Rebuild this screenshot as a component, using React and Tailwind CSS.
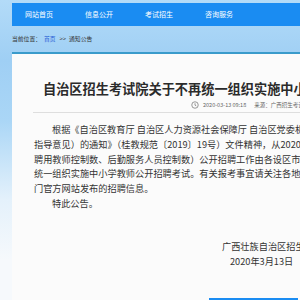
export default function App() {
  const font = { fontFamily: '"Noto Sans CJK SC", "Noto Sans", sans-serif' };
  return (
    <div
      className="w-[300px] h-[300px] overflow-hidden bg-[linear-gradient(180deg,#b3dbf8_0px,#9fcff4_60px,#aad6f6_120px,#e4f1fb_200px,#f6f9fc_260px)]"
      style={font}
    >
      <div className="w-[700px]">
        {/* nav */}
        <div className="mt-[3px] ml-[12px] h-[23px] bg-[#1a8cf2] flex items-center text-white text-[7px] whitespace-nowrap">
          <span className="ml-[13px] w-[60px]">网站首页</span>
          <span className="w-[60px]">信息公开</span>
          <span className="w-[60px]">考试招生</span>
          <span className="w-[60px]">咨询服务</span>
        </div>
        {/* breadcrumb */}
        <div className="ml-[12px] h-[26px] flex items-center text-[5.8px] text-[#333] whitespace-nowrap">
          <span>当前位置：</span>
          <span className="ml-[3px] text-[#2a62d6]">首页</span>
          <span className="ml-[4px]">&gt;&gt;</span>
          <span className="ml-[3px]">通知公告</span>
        </div>
        {/* card */}
        <div className="ml-[12px] border-t-2 border-[#3a9bcb] bg-[#fbfbfb] h-[270px] pl-[21px] text-[#333] whitespace-nowrap">
          <div className="pt-[25px] pl-[10px] h-[45px] text-[13.2px] font-bold leading-[20px] text-[#2b2b2b]">
            自治区招生考试院关于不再统一组织实施中小学教师公开招聘考试的公告
          </div>
          <div className="h-[12px] pl-[158px] flex items-center text-[5.5px] text-[#666]">
            <svg width="8" height="8" viewBox="0 0 16 16" fill="none" stroke="#777" strokeWidth="1.5">
              <circle cx="8" cy="8" r="6.5" />
              <path d="M8 4.5V8.3L10.5 9.8" />
            </svg>
            <span className="ml-[4px]">2020-03-13 09:18</span>
            <span className="ml-[8px]">来源：广西招生考试院</span>
          </div>
          <div className="border-b border-[#dedede] mt-[1px] w-[600px]"></div>
          <div className="pt-[9px] pl-[1px] text-[9.2px] leading-[14.8px] text-[#333]">
            <div className="pl-[18px]">根据《自治区教育厅 自治区人力资源社会保障厅 自治区党委机构编制委员会办公室关于</div>
            <div>指导意见）的通知》（桂教规范〔2019〕19号）文件精神，从2020年起，全区中小学教师（含</div>
            <div>聘用教师控制数、后勤服务人员控制数）公开招聘工作由各设区市组织实施，自治区不再</div>
            <div>统一组织实施中小学教师公开招聘考试。有关报考事宜请关注各地教育、人力资源社会保障部</div>
            <div>门官方网站发布的招聘信息。</div>
            <div className="pl-[18px]">特此公告。</div>
          </div>
          <div className="mt-[28px] text-[9.2px] leading-[15px]">
            <div className="pl-[189px]">广西壮族自治区招生考试院</div>
            <div className="pl-[197px]">2020年3月13日</div>
          </div>
          <div className="pt-[29px] pl-[176px]">
            <div className="w-[89px] h-[12px] bg-[#1a8cf2]"></div>
          </div>
        </div>
      </div>
    </div>
  );
}
